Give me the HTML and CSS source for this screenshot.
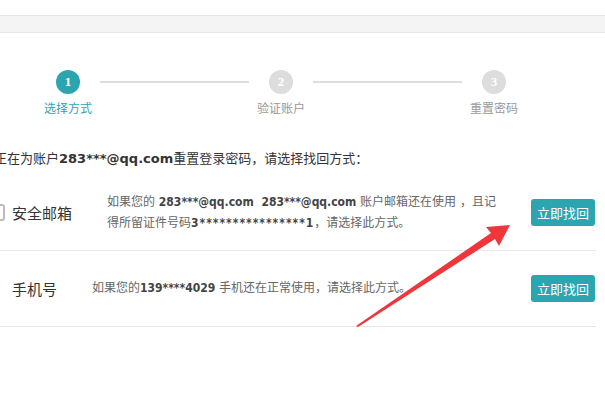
FILE: index.html
```html
<html>
  <head>
    <title>找回密码</title>
    <link rel="stylesheet" href="styles.css">
  </head>
  <body>
    <div class="topbar"></div>
    <div class="steps">
      <div class="step active">
        <div class="num">1</div>
        <div class="label">选择方式</div>
      </div>
      <div class="line"></div>
      <div class="step">
        <div class="num">2</div>
        <div class="label">验证账户</div>
      </div>
      <div class="line"></div>
      <div class="step">
        <div class="num">3</div>
        <div class="label">重置密码</div>
      </div>
    </div>
    <div class="content">
      <p class="tip">正在为账户<b>283***@qq.com</b>重置登录密码，请选择找回方式：</p>
      <div class="option">
        <div class="name"><span class="icon"></span>安全邮箱</div>
        <div class="desc">如果您的 <b>283***@qq.com</b>&nbsp; <b>283***@qq.com</b> 账户邮箱还在使用 ，且记<br>得所留证件号码<b class="stars">3****************1</b>，请选择此方式。</div>
        <button class="button">立即找回</button>
      </div>
      <div class="option">
        <div class="name"><span class="icon blank"></span>手机号</div>
        <div class="desc">如果您的<b>139****4029</b> 手机还在正常使用，请选择此方式。</div>
        <button class="button">立即找回</button>
      </div>
    </div>
    <!-- annotation arrow drawn over the page -->
    <svg class="arrow" width="605" height="403" viewBox="0 0 605 403">
      <polygon points="510,225 486,227 491,233 356,326 358,327 495,239 499,246" fill="#f0363b"/>
    </svg>
  </body>
</html>
```

FILE: styles.css
```css
body {
  margin: 0;
  font-family: "DejaVu Sans", "Noto Sans CJK SC", sans-serif;
  color: #333333;
  background: #ffffff;
  overflow: hidden;
}
.topbar {
  margin-top: 15px;
  height: 16px;
  background-color: #f4f4f4;
  border-top: 1px solid #e4e4e4;
  border-bottom: 1px solid #e8e8e8;
}
/* progress steps */
.steps {
  display: flex;
  align-items: flex-start;
  gap: 1px;
  margin-top: 37px;
  padding-left: 38px;
}
.step {
  width: 60px;
  display: flex;
  flex-direction: column;
  align-items: center;
}
.step .num {
  width: 24px;
  height: 24px;
  border-radius: 50%;
  background-color: #dddddd;
  color: #ffffff;
  font-family: "Liberation Serif", serif;
  font-weight: bold;
  font-size: 13px;
  line-height: 24px;
  text-align: center;
}
.step .label {
  margin-top: 6px;
  font-family: "Noto Sans CJK SC", sans-serif;
  font-size: 12px;
  line-height: 16px;
  color: #999999;
  white-space: nowrap;
}
.step.active .num {
  background-color: #2ba6b1;
}
.step.active .label {
  color: #2ba6b1;
}
.steps .line {
  width: 149px;
  height: 2px;
  margin: 11px 1px 0;
  background-color: #dddddd;
}
/* options */
.content {
  width: 607px;
  margin-left: -11px;
}
.tip {
  margin: 33px 0 6px;
  padding-left: 5px;
  font-size: 13px;
  line-height: 20px;
  white-space: nowrap;
}
.tip b {
  font-weight: bold;
}
.option {
  display: flex;
  align-items: center;
  height: 75px;
  border-bottom: 1px solid #e8e8e8;
}
.option .name {
  display: flex;
  align-items: center;
  margin-right: 35px;
  font-family: "Noto Sans CJK SC", sans-serif;
  font-size: 15px;
  color: #333333;
  white-space: nowrap;
}
.option .icon {
  width: 12px;
  height: 13px;
  margin-right: 7px;
  border: 2px solid #bbbbbb;
  border-radius: 3px;
}
.option .icon.blank {
  visibility: hidden;
}
.option .desc {
  font-size: 12px;
  line-height: 21px;
  color: #666666;
  white-space: nowrap;
}
.option .desc b {
  font-family: "DejaVu Sans Condensed", "DejaVu Sans", sans-serif;
  color: #444444;
}
.option .desc b.stars {
  letter-spacing: 1px;
}
.button {
  margin-left: auto;
  margin-right: 1px;
  width: 64px;
  height: 27px;
  padding: 0;
  border: none;
  border-radius: 3px;
  background-color: #2ba6b1;
  color: #ffffff;
  font-family: "Noto Sans CJK SC", sans-serif;
  font-size: 13px;
  cursor: pointer;
}
.arrow {
  position: absolute;
  left: 0;
  top: 0;
  pointer-events: none;
}
```
